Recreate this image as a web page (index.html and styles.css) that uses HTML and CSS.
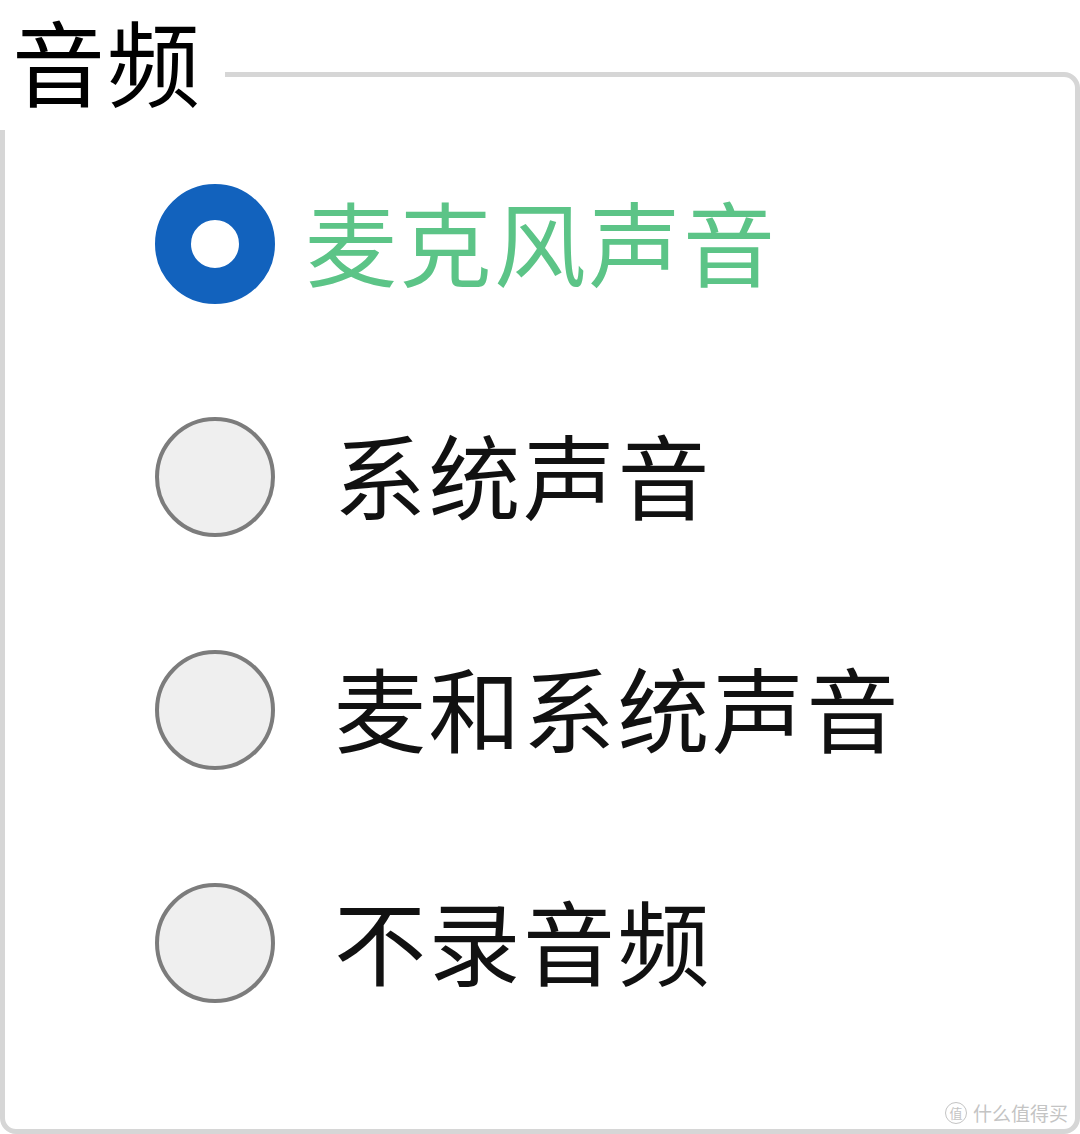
FILE: index.html
```html
<!DOCTYPE html>
<html lang="zh-CN">
<head>
<meta charset="utf-8">
<title>音频</title>
<link rel="stylesheet" href="styles.css">
</head>
<body>
<div class="page">
  <div class="group">
    <div class="legend">音频</div>
    <div class="options">
      <div class="option selected">
        <span class="radio"></span>
        <span class="label">麦克风声音</span>
      </div>
      <div class="option">
        <span class="radio"></span>
        <span class="label">系统声音</span>
      </div>
      <div class="option">
        <span class="radio"></span>
        <span class="label">麦和系统声音</span>
      </div>
      <div class="option">
        <span class="radio"></span>
        <span class="label">不录音频</span>
      </div>
    </div>
  </div>
  <div class="watermark"><span class="wm-badge">值</span><span class="wm-text">什么值得买</span></div>
</div>
</body>
</html>
```

FILE: styles.css
```css
html, body {
  margin: 0;
  padding: 0;
  background: #ffffff;
}
body {
  font-family: "Noto Sans CJK SC", "Noto Sans", sans-serif;
  width: 1080px;
  height: 1134px;
  overflow: hidden;
}
.page {
  position: relative;
  width: 1080px;
  height: 1134px;
  padding-top: 72px;
  box-sizing: border-box;
}
.group {
  position: relative;
  height: 1062px;
  border: 5px solid #d6d6d6;
  border-radius: 16px;
  box-sizing: border-box;
  padding: 50px 0 0 150px;
}
.legend {
  position: absolute;
  left: -5px;
  top: -72px;
  width: 225px;
  height: 125px;
  background: #ffffff;
  box-sizing: border-box;
  padding: 0 0 0 12px;
  font-size: 93px;
  line-height: 110px;
  letter-spacing: 2px;
  color: #000000;
}
.options {
  display: flex;
  flex-direction: column;
}
.option {
  display: flex;
  align-items: center;
  height: 233px;
}
.radio {
  flex: none;
  width: 120px;
  height: 120px;
  border-radius: 50%;
  border: 4px solid #7c7c7c;
  background: #efefef;
  box-sizing: border-box;
}
.selected .radio {
  border: 36px solid #1262bd;
  background: #ffffff;
}
.label {
  font-size: 92px;
  line-height: 110px;
  letter-spacing: 2.5px;
  color: #111111;
  margin-left: 59px;
  padding-bottom: 8px;
}
.selected .label {
  color: #5cc487;
  margin-left: 30px;
}
.watermark {
  position: absolute;
  right: 12px;
  bottom: 10px;
  display: flex;
  align-items: center;
  gap: 6px;
  color: #c4c4c4;
  font-size: 19px;
  line-height: 22px;
}
.wm-badge {
  width: 22px;
  height: 22px;
  border: 1.5px solid #c4c4c4;
  border-radius: 50%;
  box-sizing: border-box;
  font-size: 13px;
  line-height: 19px;
  text-align: center;
}
```
